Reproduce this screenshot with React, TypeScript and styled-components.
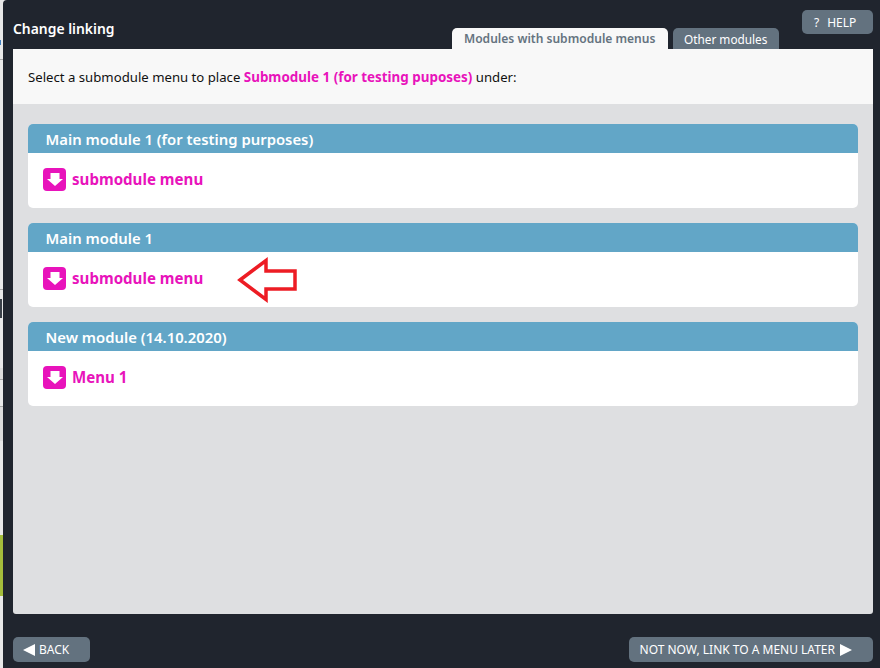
import styled, { createGlobalStyle } from "styled-components";

const modules = [
  { id: 1, title: "Main module 1 (for testing purposes)", menu: "submodule menu" },
  { id: 2, title: "Main module 1", menu: "submodule menu", marked: true },
  { id: 3, title: "New module (14.10.2020)", menu: "Menu 1" },
];

const stripMarks = [
  { top: 40, height: 5, width: 1, color: "#3f7fc0" },
  { top: 59, height: 1, width: 3, color: "#a9a9a9" },
  { top: 289, height: 1, width: 3, color: "#a9a9a9" },
  { top: 299, height: 19, width: 2, color: "#3a4048" },
  { top: 368, height: 11, width: 3, color: "#dcdcdc" },
  { top: 379, height: 1, width: 3, color: "#a9a9a9" },
  { top: 406, height: 1, width: 3, color: "#a9a9a9" },
  { top: 407, height: 34, width: 3, color: "#dcdcdc" },
  { top: 535, height: 61, width: 3, color: "#a4bd3b" },
];

const App = (): JSX.Element => {
  return (
    <>
      <GlobalStyle />
      <Page>
        <BehindStrip>
          {stripMarks.map((mark) => (
            <StripMark
              key={mark.top}
              $top={mark.top}
              $height={mark.height}
              $width={mark.width}
              $color={mark.color}
            />
          ))}
        </BehindStrip>
        <Dialog>
          <Header>
            <Title>{"Change linking"}</Title>
            <Tabs>
              <Tab $active>{"Modules with submodule menus"}</Tab>
              <Tab>{"Other modules"}</Tab>
            </Tabs>
            <HelpButton>
              <span>?</span>
              <span>HELP</span>
            </HelpButton>
          </Header>

          <Panel>
            <Intro>
              {"Select a submodule menu to place "}
              <Highlight>{"Submodule 1 (for testing puposes)"}</Highlight>
              {" under:"}
            </Intro>
            <ModuleList>
              {modules.map((item) => (
                <ModuleCard key={item.id}>
                  <ModuleTitle>{item.title}</ModuleTitle>
                  <ModuleBody>
                    <MenuLink>
                      <MenuIcon>
                        <svg width="16" height="13" viewBox="0 0 16 13">
                          <path d="M3.5 0h9v6H16l-8 7-8-7h3.5z" fill="#fff" />
                        </svg>
                      </MenuIcon>
                      <MenuLabel>{item.menu}</MenuLabel>
                    </MenuLink>
                    {item.marked && (
                      <RedArrow width="62" height="46" viewBox="0 0 62 46">
                        <path
                          d="M3 23 L29 3.5 V14 H58 V32 H29 V42.5 Z"
                          fill="#fff"
                          stroke="#ed1c24"
                          strokeWidth="3.5"
                        />
                      </RedArrow>
                    )}
                  </ModuleBody>
                </ModuleCard>
              ))}
            </ModuleList>
          </Panel>

          <Footer>
            <FooterButton>
              <svg width="12" height="12" viewBox="0 0 12 12">
                <path d="M12 0v12L0 6z" fill="#fff" />
              </svg>
              {"BACK"}
            </FooterButton>
            <FooterButton $forward>
              {"NOT NOW, LINK TO A MENU LATER"}
              <svg width="12" height="12" viewBox="0 0 12 12">
                <path d="M0 0v12l12-6z" fill="#fff" />
              </svg>
            </FooterButton>
          </Footer>
        </Dialog>
      </Page>
    </>
  );
};

const GlobalStyle = createGlobalStyle`
  html, body {
    margin: 0;
    padding: 0;
    height: 100%;
    overflow: hidden;
    background: #e8e8e8;
  }
  body {
    font-family: "Noto Sans", "Open Sans", sans-serif;
  }
`;
const Page = styled.div`
  width: 880px;
  height: 668px;
  display: flex;
`;
const BehindStrip = styled.div`
  position: relative;
  width: 3px;
  flex-shrink: 0;
`;
const StripMark = styled.div<{ $top: number; $height: number; $width: number; $color: string }>`
  position: absolute;
  left: 0;
  top: ${(p) => p.$top}px;
  width: ${(p) => p.$width}px;
  height: ${(p) => p.$height}px;
  background: ${(p) => p.$color};
`;
const Dialog = styled.div`
  flex: 1;
  display: flex;
  flex-direction: column;
  padding: 0 7px 0 10px;
  background: #20252e;
  border-top-left-radius: 4px;
`;
const Header = styled.div`
  height: 49px;
  display: flex;
  align-items: flex-end;
`;
const Title = styled.h1`
  width: 101px;
  margin: 0 0 10px;
  font-size: 13.9px;
  line-height: 20px;
  font-weight: 600;
  color: #fff;
  white-space: nowrap;
`;
const Tabs = styled.div`
  display: flex;
  gap: 5px;
  margin-left: 338px;
`;
const Tab = styled.div<{ $active?: boolean }>`
  width: ${(p) => (p.$active ? "216px" : "106px")};
  box-sizing: border-box;
  height: 21px;
  padding-left: ${(p) => (p.$active ? 12 : 11)}px;
  display: flex;
  align-items: center;
  font-size: ${(p) => (p.$active ? "12.05px" : "11.8px")};
  font-weight: ${(p) => (p.$active ? 600 : 400)};
  color: ${(p) => (p.$active ? "#65737f" : "#fff")};
  background: ${(p) => (p.$active ? "#f8f8f8" : "#63727f")};
  border-radius: 5px 5px 0 0;
  white-space: nowrap;
`;
const HelpButton = styled.div`
  margin: 0 0 15px auto;
  width: 71px;
  height: 24px;
  box-sizing: border-box;
  padding-left: 12px;
  display: flex;
  align-items: center;
  gap: 8px;
  font-size: 12px;
  color: #fff;
  background: #63727f;
  border-radius: 5px;
`;
const Panel = styled.div`
  height: 565px;
  display: flex;
  flex-direction: column;
  background: #dedfe1;
  border-radius: 0 0 3px 3px;
`;
const Intro = styled.div`
  height: 55px;
  box-sizing: border-box;
  padding-left: 15px;
  display: flex;
  align-items: center;
  white-space: pre;
  font-size: 13.18px;
  color: #111;
  background: #f8f8f8;
`;
const Highlight = styled.strong`
  font-size: 13.42px;
  font-weight: 700;
  color: #e813bb;
`;
const ModuleList = styled.div`
  display: flex;
  flex-direction: column;
  gap: 15px;
  padding: 20px 15px;
`;
const ModuleCard = styled.div`
  border-radius: 5px;
  overflow: hidden;
  background: #fff;
`;
const ModuleTitle = styled.div`
  height: 29px;
  padding-left: 17.5px;
  display: flex;
  align-items: center;
  font-size: 14.85px;
  font-weight: 600;
  color: #fff;
  background: #62a6c7;
`;
const ModuleBody = styled.div`
  position: relative;
  height: 55px;
  box-sizing: border-box;
  padding: 0 0 2px 15px;
  display: flex;
  align-items: center;
`;
const MenuLink = styled.div`
  display: flex;
  align-items: center;
  gap: 6px;
  font-size: 15.1px;
  font-weight: 700;
  color: #e813bb;
`;
const MenuLabel = styled.span`
  padding-bottom: 2px;
`;
const MenuIcon = styled.span`
  width: 23px;
  height: 23px;
  display: flex;
  align-items: center;
  justify-content: center;
  border-radius: 4px;
  background: #e813bb;
`;
const RedArrow = styled.svg`
  position: absolute;
  left: 209px;
  top: 5px;
`;
const Footer = styled.div`
  flex: 1;
  display: flex;
  justify-content: space-between;
  align-items: flex-start;
  padding-top: 23px;
`;
const FooterButton = styled.div<{ $forward?: boolean }>`
  height: 25px;
  box-sizing: border-box;
  padding: 0 21px 0 ${(p) => (p.$forward ? 11 : 10)}px;
  display: flex;
  align-items: center;
  gap: ${(p) => (p.$forward ? 5 : 4)}px;
  font-size: 12px;
  color: #fff;
  background: #63727f;
  border-radius: 5px;
`;

export default App;
